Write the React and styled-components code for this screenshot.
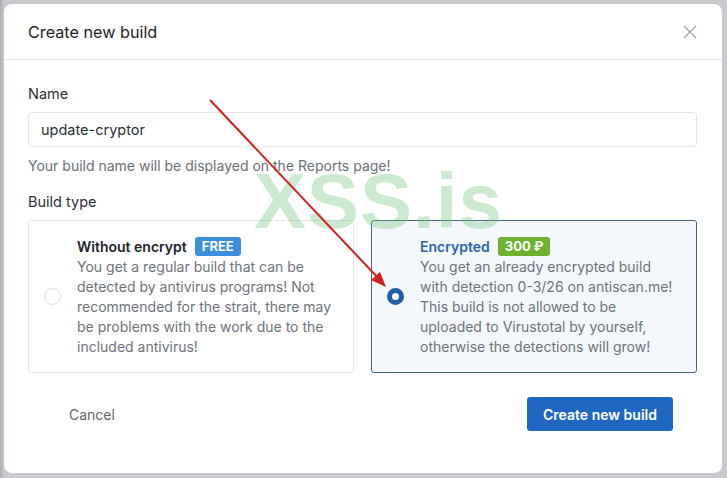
import React from 'react'
import styled, { createGlobalStyle } from 'styled-components'

const GlobalStyle = createGlobalStyle`
  html, body {
    margin: 0;
    padding: 0;
    background: #c8cacd;
    font-family: Inter, "Noto Sans", sans-serif;
  }
  * { box-sizing: border-box; }
`

const Backdrop = styled.div`
  width: 727px;
  height: 478px;
  padding: 4px 5px 5px 4px;
  background: linear-gradient(90deg, #b9a7b4 0px, #c8cacd 4px);
`

const Modal = styled.div`
  position: relative;
  width: 718px;
  height: 469px;
  background: #fff;
  border-radius: 8px;
  display: flex;
  flex-direction: column;
  overflow: hidden;
`

const Header = styled.div`
  height: 56px;
  padding: 0 22px 0 24px;
  display: flex;
  align-items: center;
  justify-content: space-between;
  border-bottom: 1px solid #e4e6ea;
`

const Title = styled.h2`
  margin: 0;
  font-size: 16.2px;
  font-weight: 400;
  color: #1f2329;
`

const CloseButton = styled.button`
  border: 0;
  background: none;
  padding: 0;
  width: 20px;
  height: 20px;
  display: flex;
  align-items: center;
  justify-content: center;
  color: #a3a8b0;
`

const Body = styled.div`
  padding: 24px 25px 0 24px;
  display: flex;
  flex-direction: column;
`

const Label = styled.div`
  font-size: 14.5px;
  line-height: 20px;
  color: #2b2f36;
  margin-bottom: 8px;
`

const Input = styled.input`
  height: 35px;
  border: 1px solid #e3e5e9;
  border-radius: 4px;
  padding: 0 12px;
  font-family: inherit;
  font-size: 14.5px;
  color: #2b2f36;
  outline: none;
`

const Help = styled.div`
  margin-top: 9px;
  margin-bottom: 16px;
  font-size: 14px;
  line-height: 20px;
  color: #6b7078;
`

const Options = styled.div`
  display: grid;
  grid-template-columns: 1fr 1fr;
  gap: 17px;
`

const Option = styled.label`
  height: 153px;
  display: flex;
  align-items: center;
  gap: 16px;
  padding: 0 14px 0 15px;
  border: 1px solid ${p => (p.active ? '#46667f' : '#e3e5e9')};
  background: ${p => (p.active ? '#f4f8fc' : '#fff')};
  border-radius: 3px;
`

const Radio = styled.span`
  flex: none;
  width: 17px;
  height: 17px;
  border-radius: 50%;
  border: ${p => (p.checked ? '5px solid #1f5ea8' : '1px solid #d9dce1')};
  background: #fff;
`

const OptionText = styled.div`
  display: flex;
  flex-direction: column;
`

const OptionHead = styled.div`
  display: flex;
  align-items: center;
  gap: 8px;
  height: 20px;
`

const OptionTitle = styled.span`
  font-size: 14px;
  font-weight: 600;
  color: ${p => (p.active ? '#2d64ab' : '#22262c')};
`

const Badge = styled.span`
  padding: 0 7px;
  height: 19px;
  line-height: 19px;
  border-radius: 3px;
  background: ${p => p.color};
  color: #fff;
  font-size: 13px;
  font-weight: 700;
`

const Description = styled.div`
  font-size: 14px;
  line-height: 20px;
  color: #6e737b;
`

const Footer = styled.div`
  padding: 24px 49px 0 49px;
  display: flex;
  align-items: center;
  justify-content: space-between;
`

const CancelButton = styled.button`
  border: 0;
  background: none;
  padding: 0 16px;
  height: 34px;
  font-family: inherit;
  font-size: 14px;
  color: #5f646c;
`

const PrimaryButton = styled.button`
  height: 34px;
  width: 146px;
  border: 0;
  border-radius: 3px;
  background: #1f67c0;
  color: #fff;
  font-family: inherit;
  font-size: 14px;
  font-weight: 600;
`

const Watermark = styled.div`
  position: absolute;
  left: 250px;
  top: 152px;
  font-family: "Liberation Sans", Arial, sans-serif;
  font-weight: 700;
  font-size: 78px;
  letter-spacing: 1px;
  color: rgba(110, 195, 120, 0.35);
  pointer-events: none;
`

const ArrowLayer = styled.svg`
  position: absolute;
  left: 0;
  top: 0;
  pointer-events: none;
`

const CloseIcon = () => (
  <svg width="14" height="14" viewBox="0 0 14 14" fill="none" stroke="currentColor" strokeWidth="1.4">
    <path d="M1 1 L13 13 M13 1 L1 13" />
  </svg>
)

export default function App() {
  return (
    <Backdrop>
      <GlobalStyle />
      <Modal>
        <Header>
          <Title>Create new build</Title>
          <CloseButton><CloseIcon /></CloseButton>
        </Header>
        <Body>
          <Label>Name</Label>
          <Input defaultValue="update-cryptor" />
          <Help>Your build name will be displayed on the Reports page!</Help>
          <Label>Build type</Label>
          <Options>
            <Option>
              <Radio />
              <OptionText>
                <OptionHead>
                  <OptionTitle>Without encrypt</OptionTitle>
                  <Badge color="#3c8fdc">FREE</Badge>
                </OptionHead>
                <Description>
                  You get a regular build that can be detected by antivirus programs! Not recommended for the strait, there may be problems with the work due to the included antivirus!
                </Description>
              </OptionText>
            </Option>
            <Option active>
              <Radio checked />
              <OptionText>
                <OptionHead>
                  <OptionTitle active>Encrypted</OptionTitle>
                  <Badge color="#6cb22f">300 ₽</Badge>
                </OptionHead>
                <Description>
                  You get an already encrypted build with detection 0-3/26 on antiscan.me! This build is not allowed to be uploaded to Virustotal by yourself, otherwise the detections will grow!
                </Description>
              </OptionText>
            </Option>
          </Options>
        </Body>
        <Footer>
          <CancelButton>Cancel</CancelButton>
          <PrimaryButton>Create new build</PrimaryButton>
        </Footer>
        <Watermark>XSS.is</Watermark>
        <ArrowLayer width="718" height="469">
          <line x1="206" y1="96" x2="376" y2="276" stroke="#d41f1f" strokeWidth="2" />
          <polygon points="382,283 367,276 376,268" fill="#d41f1f" />
        </ArrowLayer>
      </Modal>
    </Backdrop>
  )
}
